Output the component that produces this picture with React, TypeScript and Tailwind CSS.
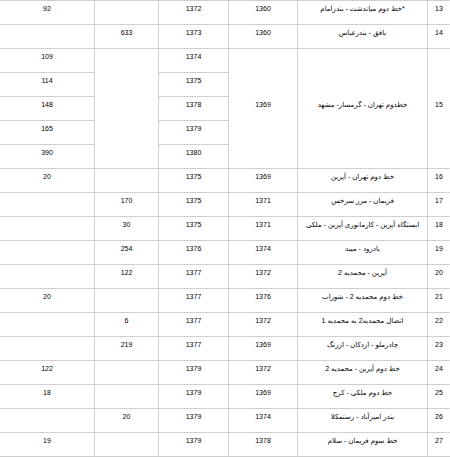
import React from "react";

type Row = {
  n: string;
  name: string;
  y1: string;
  y2: string;
  b: string;
  a: string;
};

const rows: Row[] = [
  { n: "13", name: "*خط دوم میاندشت - بندرامام", y1: "1360", y2: "1372", b: "", a: "92" },
  { n: "14", name: "بافق - بندرعباس", y1: "1360", y2: "1373", b: "633", a: "" },
];

const after: Row[] = [
  { n: "16", name: "خط دوم تهران - آپرین", y1: "1369", y2: "1375", b: "", a: "20" },
  { n: "17", name: "فریمان - مرز سرخس", y1: "1371", y2: "1375", b: "170", a: "" },
  { n: "18", name: "ایستگاه آپرین - کارمانوری آپرین - ملکی", y1: "1371", y2: "1375", b: "30", a: "" },
  { n: "19", name: "بادرود - میبد", y1: "1374", y2: "1376", b: "254", a: "" },
  { n: "20", name: "آپرین - محمدیه 2", y1: "1372", y2: "1377", b: "122", a: "" },
  { n: "21", name: "خط دوم محمدیه 2 - شوراب", y1: "1376", y2: "1377", b: "", a: "20" },
  { n: "22", name: "اتصال محمدیه2 به محمدیه 1", y1: "1372", y2: "1377", b: "6", a: "" },
  { n: "23", name: "چادرملو - اردکان - ازرنگ", y1: "1369", y2: "1377", b: "219", a: "" },
  { n: "24", name: "خط دوم آپرین - محمدیه 2", y1: "1372", y2: "1379", b: "", a: "122" },
  { n: "25", name: "خط دوم ملکی - کرج", y1: "1369", y2: "1379", b: "", a: "18" },
  { n: "26", name: "بندر امیرآباد - رستمکلا", y1: "1374", y2: "1379", b: "20", a: "" },
  { n: "27", name: "خط سوم فریمان - سلام", y1: "1378", y2: "1379", b: "", a: "19" },
];

const sub = [
  { y2: "1374", a: "109" },
  { y2: "1375", a: "114" },
  { y2: "1378", a: "148" },
  { y2: "1379", a: "165" },
  { y2: "1380", a: "390" },
];

function Cell({ children, className = "" }: { children?: React.ReactNode; className?: string }) {
  return (
    <div className={`flex items-center justify-center bg-white pb-[8px] text-[7px] leading-[9px] text-black ${className}`}>
      {children}
    </div>
  );
}

function FullRow({ r }: { r: Row }) {
  return (
    <>
      <Cell className="col-start-1">{r.n}</Cell>
      <Cell className="col-start-2 whitespace-nowrap text-[7.5px]">{r.name}</Cell>
      <Cell className="col-start-3">{r.y1}</Cell>
      <Cell className="col-start-4">{r.y2}</Cell>
      <Cell className="col-start-5">{r.b}</Cell>
      <Cell className="col-start-6">{r.a}</Cell>
    </>
  );
}

export default function App() {
  return (
    <div className="h-[457px] w-[450px] overflow-hidden bg-white" style={{ fontFamily: '"Liberation Sans", "DejaVu Sans", sans-serif' }}>
      <div
        dir="rtl"
        className="grid w-[450px] auto-rows-[23px] grid-cols-[22px_129px_68px_69px_63px_94px] gap-px bg-[#cfcfcf] py-px"
      >
        {rows.map((r) => (
          <FullRow key={r.n} r={r} />
        ))}
        <Cell className="col-start-1 row-span-5">15</Cell>
        <Cell className="col-start-2 row-span-5 whitespace-nowrap text-[7.5px]">خطدوم تهران - گرمسار- مشهد</Cell>
        <Cell className="col-start-3 row-span-5">1369</Cell>
        <Cell className="col-start-4">{sub[0].y2}</Cell>
        <Cell className="col-start-5 row-span-5"></Cell>
        <Cell className="col-start-6">{sub[0].a}</Cell>
        {sub.slice(1).map((s) => (
          <React.Fragment key={s.a}>
            <Cell className="col-start-4">{s.y2}</Cell>
            <Cell className="col-start-6">{s.a}</Cell>
          </React.Fragment>
        ))}
        {after.map((r) => (
          <FullRow key={r.n} r={r} />
        ))}
      </div>
    </div>
  );
}
